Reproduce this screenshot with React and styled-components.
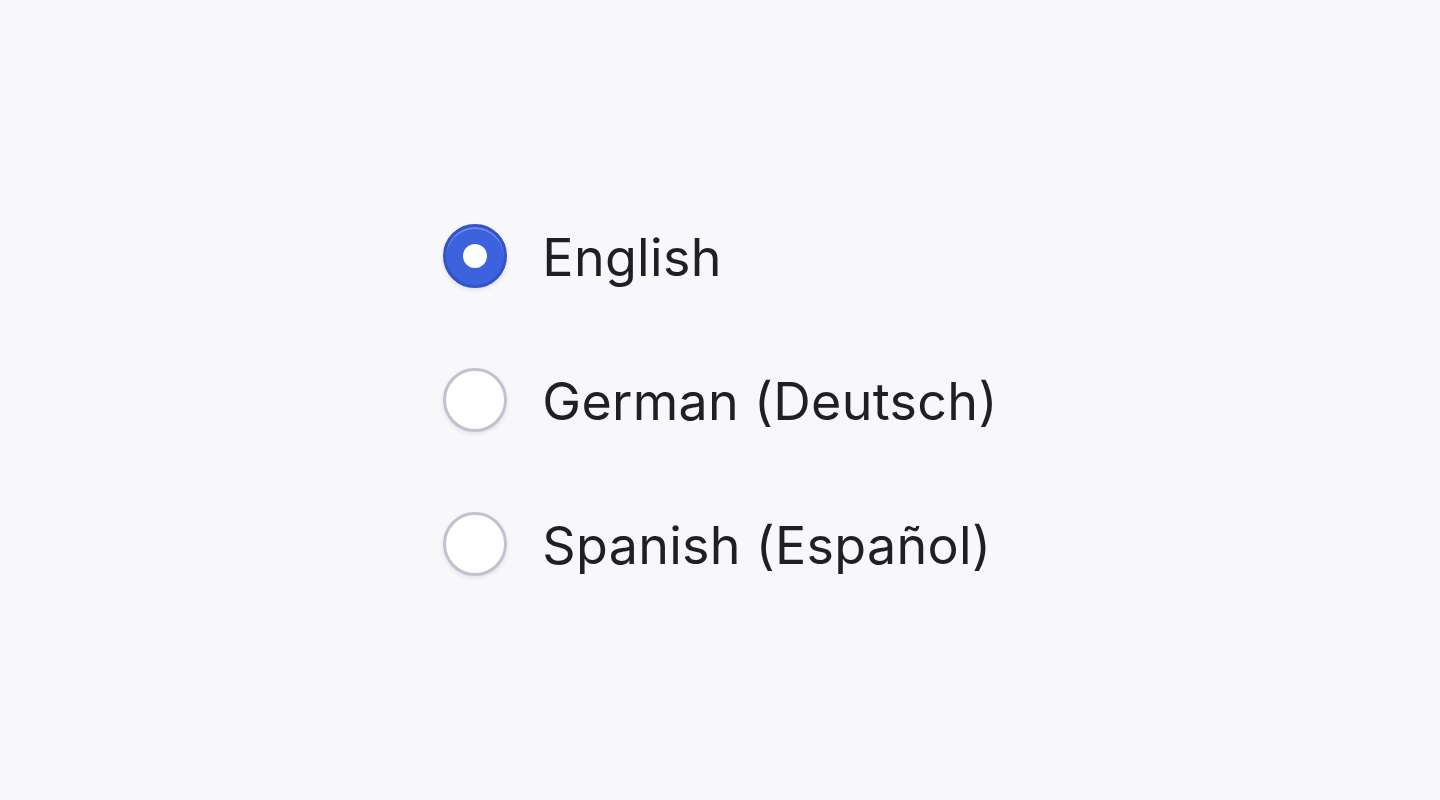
import React, { useState } from "react";
import styled, { createGlobalStyle } from "styled-components";

const GlobalStyle = createGlobalStyle`
  html, body {
    margin: 0;
    padding: 0;
    background: #f8f8fa;
  }
  body {
    font-family: Inter, "Noto Sans", sans-serif;
  }
`;

const Page = styled.div`
  display: flex;
  align-items: center;
  justify-content: center;
  width: 100vw;
  height: 100vh;
  background: #f8f8fa;
`;

const Group = styled.div`
  display: flex;
  flex-direction: column;
  gap: 80px;
  margin-left: 1px;
`;

const Option = styled.label`
  display: flex;
  align-items: center;
  gap: 35px;
  height: 64px;
  cursor: pointer;
`;

const Radio = styled.span`
  box-sizing: border-box;
  display: flex;
  align-items: center;
  justify-content: center;
  flex-shrink: 0;
  width: 64px;
  height: 64px;
  border-radius: 50%;
  border: ${(p) => (p.checked ? "3px solid #3452c9" : "3px solid #c2c2cf")};
  background: ${(p) => (p.checked ? "#3d62de" : "#ffffff")};
  box-shadow: ${(p) =>
    p.checked
      ? "inset 0 2px 0 rgba(255,255,255,0.25), 0 2px 4px rgba(40,40,80,0.12)"
      : "0 2px 4px rgba(40,40,80,0.1)"};
`;

const Dot = styled.span`
  width: 24px;
  height: 24px;
  border-radius: 50%;
  background: #ffffff;
`;

const Label = styled.span`
  font-size: 52px;
  color: #1f1f25;
  letter-spacing: 0.3px;
  padding-top: 2px;
`;

const options = ["English", "German (Deutsch)", "Spanish (Español)"];

export default function App() {
  const [selected, setSelected] = useState(0);

  return (
    <>
      <GlobalStyle />
      <Page>
        <Group>
          {options.map((opt, i) => (
            <Option key={opt} onClick={() => setSelected(i)}>
              <Radio checked={selected === i}>{selected === i && <Dot />}</Radio>
              <Label>{opt}</Label>
            </Option>
          ))}
        </Group>
      </Page>
    </>
  );
}
